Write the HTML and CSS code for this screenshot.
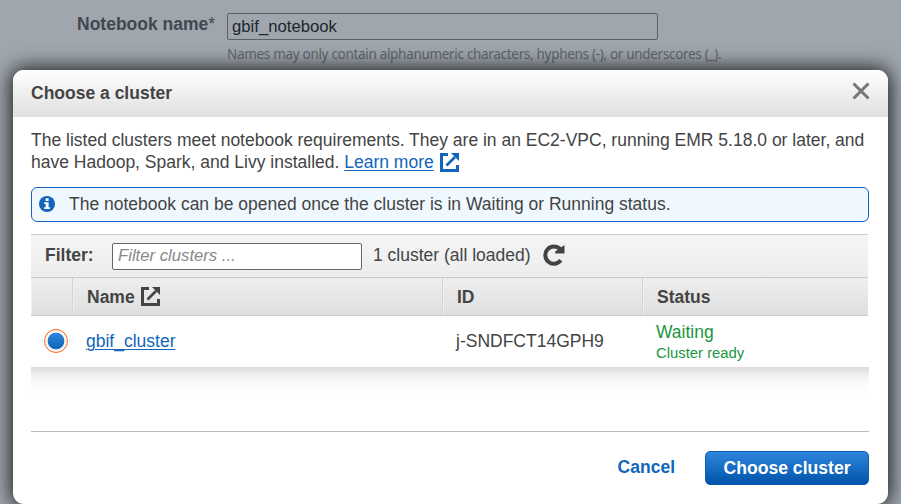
FILE: index.html
```html
<!DOCTYPE html>
<html lang="en">
<head>
<meta charset="utf-8">
<title>Choose a cluster</title>
<link rel="stylesheet" href="styles.css">
</head>
<body>
<div class="page">
  <div class="form-row">
    <label class="form-label" for="notebook">Notebook name<span class="star">*</span></label>
    <div class="field">
      <input class="name-input" id="notebook" type="text" value="gbif_notebook">
      <div class="hint">Names may only contain alphanumeric characters, hyphens (-), or underscores (_).</div>
    </div>
  </div>
  <section class="modal">
    <header class="modal-header">
      <h1>Choose a cluster</h1>
      <svg class="close" viewBox="0 0 18 18"><path d="M1.500 1.500l15 15M16.500 1.500l-15 15"/></svg>
    </header>
    <div class="modal-body">
      <p class="intro">The listed clusters meet notebook requirements. They are in an EC2-VPC, running EMR 5.18.0 or later, and<br>have Hadoop, Spark, and Livy installed. <a href="#">Learn more</a> <svg class="ext blue" viewBox="0 0 19 19"><path d="M8 1.500H1.500v16h16V12"/><path class="shaft" d="M6.500 12.500l8.500-8.500"/><path class="head" d="M11 0h8v8z"/></svg></p>
      <div class="notice">
        <svg class="info" viewBox="0 0 16 16"><circle cx="8" cy="8" r="8"/><path d="M6.600 2.300h3v2.600h-3zM5.200 6.300h4.400v5h1.400V13H5.200v-1.700h1.500V8H5.200z"/></svg>
        <span>The notebook can be opened once the cluster is in Waiting or Running status.</span>
      </div>
      <div class="filter">
        <b class="filter-label">Filter:</b>
        <input class="filter-input" type="text" placeholder="Filter clusters ...">
        <span class="count">1 cluster (all loaded)</span>
        <svg class="refresh" viewBox="0 0 23 22"><path d="M18.200 5.200A8.600 8.600 0 1 0 18.800 16.300"/><path class="head" d="M22.500 1v8.500h-9.300V7.500z"/></svg>
      </div>
      <div class="grid head-row">
        <div></div>
        <div class="th">Name <svg class="ext" viewBox="0 0 19 19"><path d="M8 1.500H1.500v16h16V12"/><path class="shaft" d="M6.500 12.500l8.500-8.500"/><path class="head" d="M11 0h8v8z"/></svg></div>
        <div class="th">ID</div>
        <div class="th">Status</div>
      </div>
      <div class="grid row">
        <div><span class="radio"></span></div>
        <div class="td"><a href="#">gbif_cluster</a></div>
        <div class="td">j-SNDFCT14GPH9</div>
        <div class="td status"><span>Waiting</span><small>Cluster ready</small></div>
      </div>
      <div class="empty"></div>
      <footer class="actions">
        <span class="cancel">Cancel</span>
        <button class="primary" type="button">Choose cluster</button>
      </footer>
    </div>
  </section>
</div>
</body>
</html>
```
FILE: styles.css
```css
* { box-sizing: border-box; }
body {
  margin: 0;
  width: 901px;
  height: 504px;
  overflow: hidden;
  background: #9fa6ad;
  color: #444;
  font: 17.5px/22px "Liberation Sans", Arial, sans-serif;
}
svg { display: block; fill: none; stroke: currentColor; flex: none; }
a { color: #1166bb; text-decoration: underline; text-underline-offset: 2px; text-decoration-thickness: 1px; }
.page { height: 504px; display: flex; flex-direction: column; }
.form-row { height: 70px; flex: none; display: flex; padding: 13px 0 0 77px; }
.form-label { width: 150px; font-weight: 700; color: #41484f; }
.star { font-weight: 400; }
.name-input {
  display: block;
  width: 431px;
  height: 27px;
  padding: 0 4px;
  border: 1px solid #596067;
  border-radius: 2px;
  background: transparent;
  color: #20262e;
  font: 16.7px "Liberation Sans", Arial, sans-serif;
}
.hint { margin-top: 5px; font: 13.5px/18px "Noto Sans", "Open Sans", sans-serif; letter-spacing: -.31px; color: #5f666d; white-space: nowrap; }
.modal {
  position: relative;
  flex: none;
  width: 875px;
  height: 434px;
  margin-left: 13px;
  border-radius: 11px;
  background: #fff;
  box-shadow: 0 0 20px 2px rgba(0, 0, 0, .85);
}
.modal-header {
  height: 47px;
  display: flex;
  align-items: center;
  justify-content: space-between;
  padding: 0 18px 2px;
  border-radius: 11px 11px 0 0;
  background: linear-gradient(#fff, #dfdfdf);
}
h1 { margin: 0; font-size: 17.5px; }
.close { width: 18px; height: 18px; margin-top: -3px; stroke: #777; stroke-width: 3; }
.modal-body { padding: 12px 19px 0 18px; }
.intro { margin: 0; white-space: nowrap; }
.ext { display: inline-block; width: 19px; height: 19px; stroke-width: 3; vertical-align: -4px; }
.ext.blue { margin-left: 1px; color: #1166bb; }
.shaft { stroke-width: 2.600; }
.head { fill: currentColor; stroke: none; }
.notice {
  height: 35px;
  margin-top: 14px;
  display: flex;
  align-items: center;
  gap: 14px;
  padding: 0 0 2px 7px;
  border: 1px solid #1166bb;
  border-radius: 6px;
  background: #f0f8ff;
}
.info { width: 16px; height: 16px; stroke: none; }
.info circle { fill: #1166bb; }
.info path { fill: #fff; }
.filter {
  height: 43px;
  margin: 12px 1px 0 0;
  display: flex;
  align-items: center;
  padding-left: 14px;
  border-top: 1px solid #ccc;
  background: linear-gradient(#f5f5f5, #ededed);
}
.filter-label { width: 67px; margin-top: -2px; }
.filter-input {
  width: 250px;
  height: 27px;
  padding: 0 5px;
  border: 1px solid #666;
  border-radius: 2px;
  background: #fff;
  font: italic 16.7px "Liberation Sans", Arial, sans-serif;
}
.filter-input::placeholder { color: #888; }
.count { width: 169px; margin: -2px 0 0 11px; white-space: nowrap; }
.refresh { width: 23px; height: 22px; margin-top: -3px; stroke-width: 4; }
.grid { display: grid; grid-template-columns: 42px 370px 200px 1fr; margin-right: 1px; }
.head-row {
  height: 39px;
  border: solid #c9c9c9;
  border-width: 1px 0;
  background: linear-gradient(#eee, #dfdfdf);
  font-weight: 700;
}
.head-row > div { border-right: 1px solid #d5d5d5; box-shadow: inset 1px 0 #efefef; }
.head-row > div:last-child { border-right: 0; }
.th { display: flex; align-items: center; gap: 6px; padding-left: 14px; }
.row { height: 51px; }
.radio {
  display: block;
  width: 24px;
  height: 24px;
  margin: 13px 0 0 13px;
  border: 1px solid #ff6a13;
  border-radius: 50%;
  background: radial-gradient(circle, transparent 0 7.900px, #f5f5f5 8.700px), linear-gradient(#2f84dc 3px, #1166bb 19px);
}
.td { padding: 14px 0 0 13px; }
.td.status { display: flex; flex-direction: column; padding-top: 5px; color: #1a9641; }
.status small { font-size: 14.85px; line-height: 20px; }
.empty {
  height: 65px;
  border-bottom: 1px solid #bbb;
  background: linear-gradient(#dcdcdc, #f0f0f0 8px, #fafafa 17px, #fff 28px);
}
.actions { display: flex; justify-content: flex-end; align-items: center; padding-top: 19px; gap: 30px; font-weight: 700; }
.cancel { margin-top: -2px; color: #1166bb; }
.primary {
  width: 164px;
  height: 34px;
  padding: 0;
  border: 1px solid #0b5cad;
  border-radius: 5px;
  background: linear-gradient(#2f84dc, #0055aa);
  color: #fff;
  font: bold 17.6px "Liberation Sans", Arial, sans-serif;
}
```
